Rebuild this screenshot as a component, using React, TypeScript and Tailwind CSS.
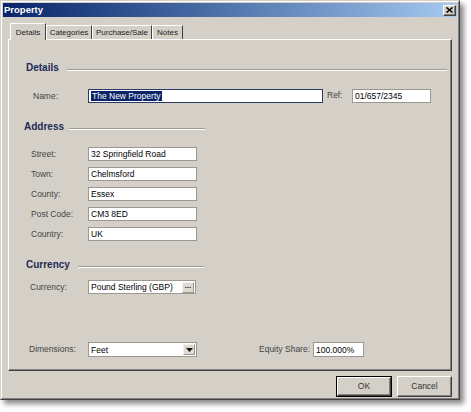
import React from "react";

const raised =
  "border border-t-white border-l-white border-r-[#404040] border-b-[#404040] shadow-[inset_-1px_-1px_0_#808080]";

type FieldProps = {
  value: string;
  width: string;
  focused?: boolean;
  selected?: boolean;
  addon?: "dots" | "arrow";
};

function Field({ value, width, focused, selected, addon }: FieldProps) {
  return (
    <div
      className={`${width} flex h-full items-center border bg-white pl-[2px] pr-px ${
        focused ? "border-[#2c3a68]" : "border-[#9a9890]"
      }`}
    >
      <span className="flex-1 truncate leading-[12px] text-black">
        {selected ? (
          <span className="bg-[#0a246a] px-px text-white">{value}</span>
        ) : (
          value
        )}
      </span>
      {addon ? (
        <div className="flex h-[11px] w-[12px] items-center justify-center border border-t-[#f4f2ee] border-l-[#f4f2ee] border-r-[#9a968e] border-b-[#9a968e] bg-[#dedad2]">
          {addon === "dots" ? (
            <span className="-mt-[3px] text-[8px] font-bold leading-none text-[#222]">
              ...
            </span>
          ) : (
            <svg width="7" height="4" viewBox="0 0 7 4">
              <path d="M0 0h7L3.5 4z" fill="#111" />
            </svg>
          )}
        </div>
      ) : null}
    </div>
  );
}

function Heading({
  title,
  rowClass,
  lineClass,
}: {
  title: string;
  rowClass: string;
  lineClass: string;
}) {
  return (
    <div className={`flex h-3 items-center ${rowClass}`}>
      <span className="text-[10px] font-bold leading-none text-[#1c2a55]">
        {title}
      </span>
      <div
        className={`mt-[3px] h-0 border-t border-b border-t-[#a09c94] border-b-white ${lineClass}`}
      />
    </div>
  );
}

const address = [
  { label: "Street:", value: "32 Springfield Road" },
  { label: "Town:", value: "Chelmsford" },
  { label: "County:", value: "Essex" },
  { label: "Post Code:", value: "CM3 8ED" },
  { label: "Country:", value: "UK" },
];

const tabs = [
  { name: "Categories", width: "w-[46px]" },
  { name: "Purchase/Sale", width: "w-[60px]" },
  { name: "Notes", width: "w-[31px]" },
];

export default function App() {
  return (
    <div className="h-[412px] w-[471px] bg-white font-['Liberation_Sans',Arial,sans-serif] text-[8.5px] text-[#444]">
      <div className="h-[400px] w-[460px] border border-t-[#d4d0c8] border-l-[#d4d0c8] border-r-[#404040] border-b-[#404040] bg-[#d4d0c8] shadow-[4px_4px_5px_rgba(0,0,0,0.45)]">
        <div className="flex h-full flex-col border border-t-white border-l-white border-r-[#808080] border-b-[#808080] p-px">
          {/* title bar */}
          <div className="flex h-[14px] items-center justify-between bg-gradient-to-r from-[#0a246a] to-[#a6caf0] pl-[1px] pr-[1px]">
            <span className="text-[9.5px] font-bold leading-none text-white">
              Property
            </span>
            <div
              className={`flex h-[11px] w-[13px] items-center justify-center bg-[#d4d0c8] ${raised}`}
            >
              <svg width="7" height="6" viewBox="0 0 7 6">
                <path
                  d="M0.5 0.5L6.5 5.5M6.5 0.5L0.5 5.5"
                  stroke="#000"
                  strokeWidth="1.5"
                />
              </svg>
            </div>
          </div>

          {/* tabs */}
          <div className="mx-[5px] mt-[6px] flex items-end pl-[2px] text-[8px]">
            <div className="relative z-10 -mb-px flex h-[17px] w-[36px] items-start justify-center border-l border-t border-r border-l-white border-t-white border-r-[#404040] bg-[#d4d0c8] pt-[3px] text-[#222]">
              Details
            </div>
            {tabs.map((t) => (
              <div
                key={t.name}
                className={`flex h-[14px] ${t.width} items-center justify-center border-l border-t border-r border-l-white border-t-white border-r-[#404040] text-[#222]`}
              >
                {t.name}
              </div>
            ))}
          </div>

          {/* panel */}
          <div
            className={`mx-[5px] flex h-[332px] flex-col border border-t-white border-l-white border-r-[#404040] border-b-[#404040] shadow-[inset_-1px_-1px_0_#808080]`}
          >
            <Heading
              title="Details"
              rowClass="mt-[22px] ml-[17px] gap-[8px]"
              lineClass="mr-[4px] flex-1"
            />

            <div className="mt-[15px] flex h-[14px] items-center">
              <span className="ml-[24px] w-[55px]">Name:</span>
              <Field
                value="The New Property"
                width="w-[235px]"
                focused
                selected
              />
              <span className="ml-[4px] w-[25px] self-start">Ref:</span>
              <Field value="01/657/2345" width="w-[79px]" />
            </div>

            <Heading
              title="Address"
              rowClass="mt-[18px] ml-[15px] gap-[5px]"
              lineClass="w-[136px]"
            />

            <div className="mt-[14px] flex flex-col gap-[6px]">
              {address.map((a) => (
                <div key={a.label} className="flex h-[14px] items-center">
                  <span className="ml-[22px] w-[57px]">{a.label}</span>
                  <Field value={a.value} width="w-[109px]" />
                </div>
              ))}
            </div>

            <Heading
              title="Currency"
              rowClass="mt-[18px] ml-[17px] gap-[8px]"
              lineClass="w-[126px]"
            />

            <div className="mt-[9px] flex h-[14px] items-center">
              <span className="ml-[21px] w-[58px]">Currency:</span>
              <Field
                value="Pound Sterling (GBP)"
                width="w-[108px]"
                addon="dots"
              />
            </div>

            <div className="mt-[48px] flex h-[15px] items-center">
              <span className="ml-[20px] w-[59px]">Dimensions:</span>
              <Field value="Feet" width="w-[109px]" addon="arrow" />
              <span className="ml-[62px] w-[54px]">Equity Share:</span>
              <Field value="100.000%" width="w-[51px]" />
            </div>
          </div>

          {/* buttons */}
          <div className="mx-[5px] mt-[5px] flex justify-end gap-[5px]">
            <div className="h-[21px] w-[56px] border border-black">
              <div
                className={`flex h-full items-center justify-center ${raised} text-[#333]`}
              >
                OK
              </div>
            </div>
            <div
              className={`flex h-[21px] w-[55px] items-center justify-center ${raised} text-[#333]`}
            >
              Cancel
            </div>
          </div>
        </div>
      </div>
    </div>
  );
}
